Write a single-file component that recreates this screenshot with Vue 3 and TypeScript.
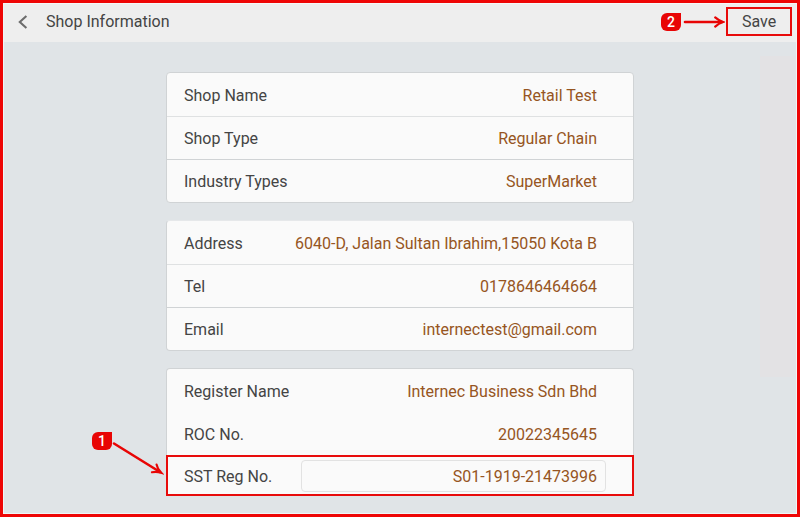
<script setup lang="ts">
import { ref } from 'vue'

interface Field {
  label: string
  value: string
}

const groups: Field[][] = [
  [
    { label: 'Shop Name', value: 'Retail Test' },
    { label: 'Shop Type', value: 'Regular Chain' },
    { label: 'Industry Types', value: 'SuperMarket' },
  ],
  [
    { label: 'Address', value: '6040-D, Jalan Sultan Ibrahim,15050 Kota B' },
    { label: 'Tel', value: '0178646464664' },
    { label: 'Email', value: 'internectest@gmail.com' },
  ],
]

const registration: Field[] = [
  { label: 'Register Name', value: 'Internec Business Sdn Bhd' },
  { label: 'ROC No.', value: '20022345645' },
]

const sstNumber = ref('S01-1919-21473996')
</script>

<template>
  <div class="page">
    <header class="bar">
      <button class="back" type="button" aria-label="Back">
        <svg width="10" height="14" viewBox="0 0 10 14" fill="none">
          <path d="M8.4 1 1.8 7l6.6 6" stroke="#6c6c6c" stroke-width="2.1" />
        </svg>
      </button>
      <h1 class="title">Shop Information</h1>
      <span class="badge">2</span>
      <svg class="arrow" width="42" height="14" viewBox="0 0 42 14" fill="none">
        <path d="M2 7H39" stroke="#e80505" stroke-width="2.6" stroke-linecap="round" />
        <path d="M32.2 2.4Q35.5 5.4 40 7Q35.5 8.6 32.2 11.6" stroke="#e80505" stroke-width="2.2" stroke-linecap="round" />
      </svg>
      <button class="save" type="button">Save</button>
    </header>

    <main class="content">
      <dl v-for="(group, index) in groups" :key="index" class="card">
        <div v-for="field in group" :key="field.label" class="row">
          <dt>{{ field.label }}</dt>
          <dd>{{ field.value }}</dd>
        </div>
      </dl>

      <section class="card open">
        <dl class="plain">
          <div v-for="field in registration" :key="field.label" class="row">
            <dt>{{ field.label }}</dt>
            <dd>{{ field.value }}</dd>
          </div>
        </dl>
        <div class="marked">
          <label for="sst">SST Reg No.</label>
          <input id="sst" v-model="sstNumber" type="text" />
          <span class="badge pinned">1</span>
          <svg class="pointer" width="52" height="36" viewBox="0 0 52 36" fill="none">
            <path d="M2 3.5 48 32" stroke="#e80505" stroke-width="2.6" stroke-linecap="round" />
            <path d="M44.6 24.6Q45.4 28.8 49 32.6Q44.4 31.2 40 32.2" stroke="#e80505" stroke-width="2.2" stroke-linecap="round" />
          </svg>
        </div>
      </section>
      <div class="shade"></div>
    </main>
  </div>
</template>

<style>
body {
  margin: 0;
}
</style>

<style scoped>
.page {
  box-sizing: border-box;
  min-height: 100vh;
  display: flex;
  flex-direction: column;
  border: 3px solid #ee0505;
  background: #e0e4e7;
  box-shadow: inset 0 0 0 1px #eff5f6;
  font-family: Roboto, "Liberation Sans", sans-serif;
  font-size: 16px;
  line-height: 20px;
  color: #444;
}

.bar {
  box-sizing: border-box;
  height: 39px;
  margin: 0 1px;
  padding: 0 4px 2px 10px;
  display: flex;
  align-items: center;
  background: #eee;
  box-shadow: inset 0 1px #f5f8f8;
}

button {
  font: inherit;
  color: inherit;
  cursor: pointer;
}

.back {
  width: 18px;
  padding: 0 4px;
  border: 0;
  background: none;
  display: flex;
}

.back svg {
  flex: none;
}

.title {
  flex: 1;
  margin: 0 0 0 14px;
  font-size: 16px;
  font-weight: 400;
}

.badge {
  width: 20px;
  height: 18px;
  border-radius: 6px 0 6px 6px;
  background: #e80505;
  color: #fff;
  font-size: 14px;
  font-weight: 500;
  line-height: 18px;
  text-align: center;
}

.arrow {
  margin: 0 1px 0 2px;
}

.save {
  box-sizing: border-box;
  width: 66px;
  height: 29px;
  padding: 0;
  border: 2px solid #e80b0b;
  background: none;
}

.content {
  position: relative;
  flex: 1;
  display: flex;
  flex-direction: column;
  align-items: center;
  gap: 17px;
  padding: 30px 20px 18px;
}

.card {
  position: relative;
  z-index: 1;
  box-sizing: border-box;
  width: 100%;
  max-width: 468px;
  margin: 0;
  border: 1px solid #d0d3d5;
  border-radius: 4px;
  background: #fafafa;
}

.card + .card:not(.open) {
  border-top-color: #e6e8ea;
}

.row {
  box-sizing: border-box;
  height: 43px;
  padding: 2px 36px 0 17px;
  display: flex;
  align-items: center;
  justify-content: space-between;
}

.row + .row {
  border-top: 1px solid #dfe1e2;
}

.row + .row + .row {
  border-top-color: #d0d3d5;
}

dd {
  margin: 0;
  color: #965522;
}

.open {
  border-bottom: 0;
  border-radius: 4px 4px 0 0;
}

.plain {
  margin: 0;
}

.plain .row + .row {
  border-top: 0;
}

.marked {
  position: relative;
  box-sizing: border-box;
  height: 41px;
  margin: 0 -1px;
  padding: 0 26px 0 16px;
  display: flex;
  align-items: center;
  justify-content: space-between;
  border: 2px solid #e80b0b;
}

.marked label {
  padding-top: 2px;
}

.marked input {
  box-sizing: border-box;
  width: 305px;
  height: 32px;
  padding: 2px 8px 0;
  border: 1px solid #e2e2e2;
  border-radius: 4px;
  background: #fafafa;
  font: inherit;
  color: #965522;
  text-align: right;
}

.pinned {
  position: absolute;
  left: -76px;
  top: -25px;
}

.pointer {
  position: absolute;
  left: -56px;
  top: -17px;
}

.shade {
  position: absolute;
  top: 14px;
  right: 1px;
  width: 36px;
  height: 321px;
  background: #e3e2e4;
}
</style>
